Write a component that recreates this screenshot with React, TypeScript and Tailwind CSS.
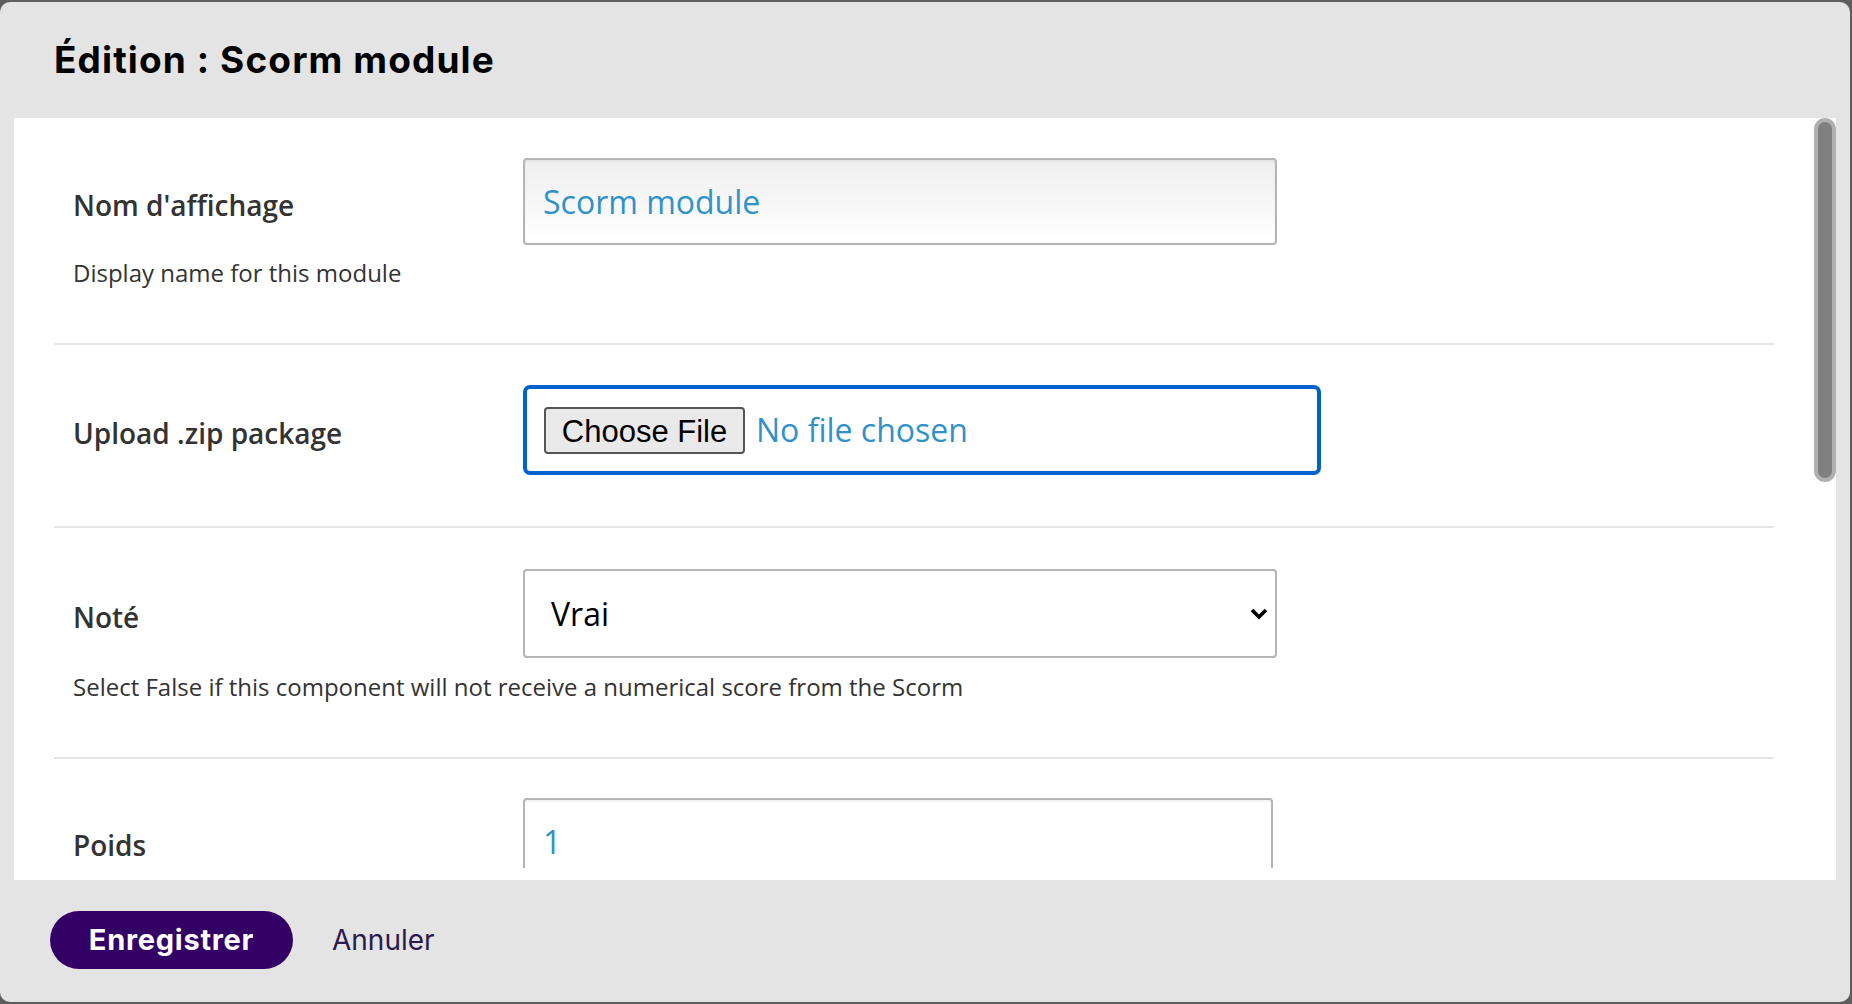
import { useState } from "react";

const labelCls = "w-[469px] shrink-0 pl-[19px] pt-[6px] font-['Open_Sans',sans-serif] text-[28px] font-semibold text-[#333333]";
const helpCls = "pl-[19px] font-['Open_Sans',sans-serif] text-[24px] leading-[32px] text-[#333333]";

const Separator = () => <div className="h-[2px] w-full bg-[#e5e5e5]" />;

const App = () => {
  const [name, setName] = useState("Scorm module");
  const [graded, setGraded] = useState("true");
  const [weight, setWeight] = useState("1");

  return (
    <div className="h-[1004px] w-full overflow-hidden bg-[#5e5e5e] pt-[2px]">
      <div className="flex h-[1000px] w-[1850px] flex-col overflow-hidden rounded-[10px] bg-[#e4e4e4]">
        {/* header */}
        <div className="flex h-[116px] shrink-0 items-center pl-[54px]">
          <h2 className="font-['Inter',sans-serif] text-[37px] font-bold tracking-[0.03em] text-black">Édition : Scorm module</h2>
        </div>

        {/* body */}
        <div className="ml-[14px] flex h-[762px] w-[1822px] bg-white pb-[12px]">
          <div className="flex-1 overflow-hidden px-[40px]">
            {/* Nom d'affichage */}
            <div className="pt-[40px] pb-[54px]">
              <div className="flex items-center">
                <label className={labelCls}>Nom d'affichage</label>
                <input
                  value={name}
                  onChange={(e) => setName(e.target.value)}
                  className="h-[87px] w-[754px] rounded-[4px] border-2 border-[#b5b5b5] bg-linear-to-b from-[#efefef] to-white pl-[18px] font-['Open_Sans',sans-serif] text-[32px] text-[#3092c9] shadow-[inset_0_2px_3px_rgba(0,0,0,0.05)] outline-none"
                />
              </div>
              <p className={`${helpCls} mt-[12px]`}>Display name for this module</p>
            </div>
            <Separator />

            {/* Upload */}
            <div className="pt-[40px] pb-[51px]">
              <div className="flex items-center">
                <label className={labelCls}>Upload .zip package</label>
                <div className="flex h-[90px] w-[798px] items-center rounded-[7px] border-4 border-[#0062cc] pl-[17px]">
                  <button className="h-[47px] w-[201px] rounded-[4px] border-2 border-[#555555] bg-[#e9e9e9] font-['Liberation_Sans',Arial,sans-serif] text-[31px] text-black">
                    Choose File
                  </button>
                  <span className="ml-[11px] font-['Open_Sans',sans-serif] text-[32px] text-[#3092c9]">No file chosen</span>
                </div>
              </div>
            </div>
            <Separator />

            {/* Noté */}
            <div className="pt-[41px] pb-[54px]">
              <div className="flex items-center">
                <label className={labelCls}>Noté</label>
                <div className="relative h-[89px] w-[754px]">
                  <select
                    value={graded}
                    onChange={(e) => setGraded(e.target.value)}
                    className="h-full w-full appearance-none rounded-[4px] border-2 border-[#b5b5b5] bg-white pl-[26px] font-['Open_Sans',sans-serif] text-[32px] text-black outline-none"
                  >
                    <option value="true">Vrai</option>
                    <option value="false">Faux</option>
                  </select>
                  <svg className="pointer-events-none absolute top-[39px] right-[9px]" width="18" height="12" viewBox="0 0 18 12">
                    <polyline points="2,2 9,9 16,2" fill="none" stroke="#000" strokeWidth="3.6" />
                  </svg>
                </div>
              </div>
              <p className={`${helpCls} mt-[13px]`}>Select False if this component will not receive a numerical score from the Scorm</p>
            </div>
            <Separator />

            {/* Poids */}
            <div className="pt-[39px]">
              <div className="flex items-center">
                <label className={labelCls}>Poids</label>
                <input
                  value={weight}
                  onChange={(e) => setWeight(e.target.value)}
                  className="h-[87px] w-[750px] rounded-[4px] border-2 border-[#b5b5b5] bg-white pl-[18px] font-['Open_Sans',sans-serif] text-[32px] text-[#3092c9] shadow-[inset_0_2px_3px_rgba(0,0,0,0.05)] outline-none"
                />
              </div>
            </div>
          </div>

          {/* scrollbar */}
          <div className="w-[22px] shrink-0">
            <div className="h-[364px] w-[22px] rounded-full border-4 border-[#b0b0b0] bg-[#808080]" />
          </div>
        </div>

        {/* footer */}
        <div className="flex flex-1 items-center gap-[39px] pl-[50px] pb-[2px]">
          <button className="h-[58px] w-[243px] rounded-full bg-[#330066] font-['Inter',sans-serif] text-[29px] font-bold tracking-[0.025em] text-white">
            Enregistrer
          </button>
          <button className="font-['Inter',sans-serif] text-[28px] text-[#2b1a4c]">Annuler</button>
        </div>
      </div>
    </div>
  );
};

export default App;
